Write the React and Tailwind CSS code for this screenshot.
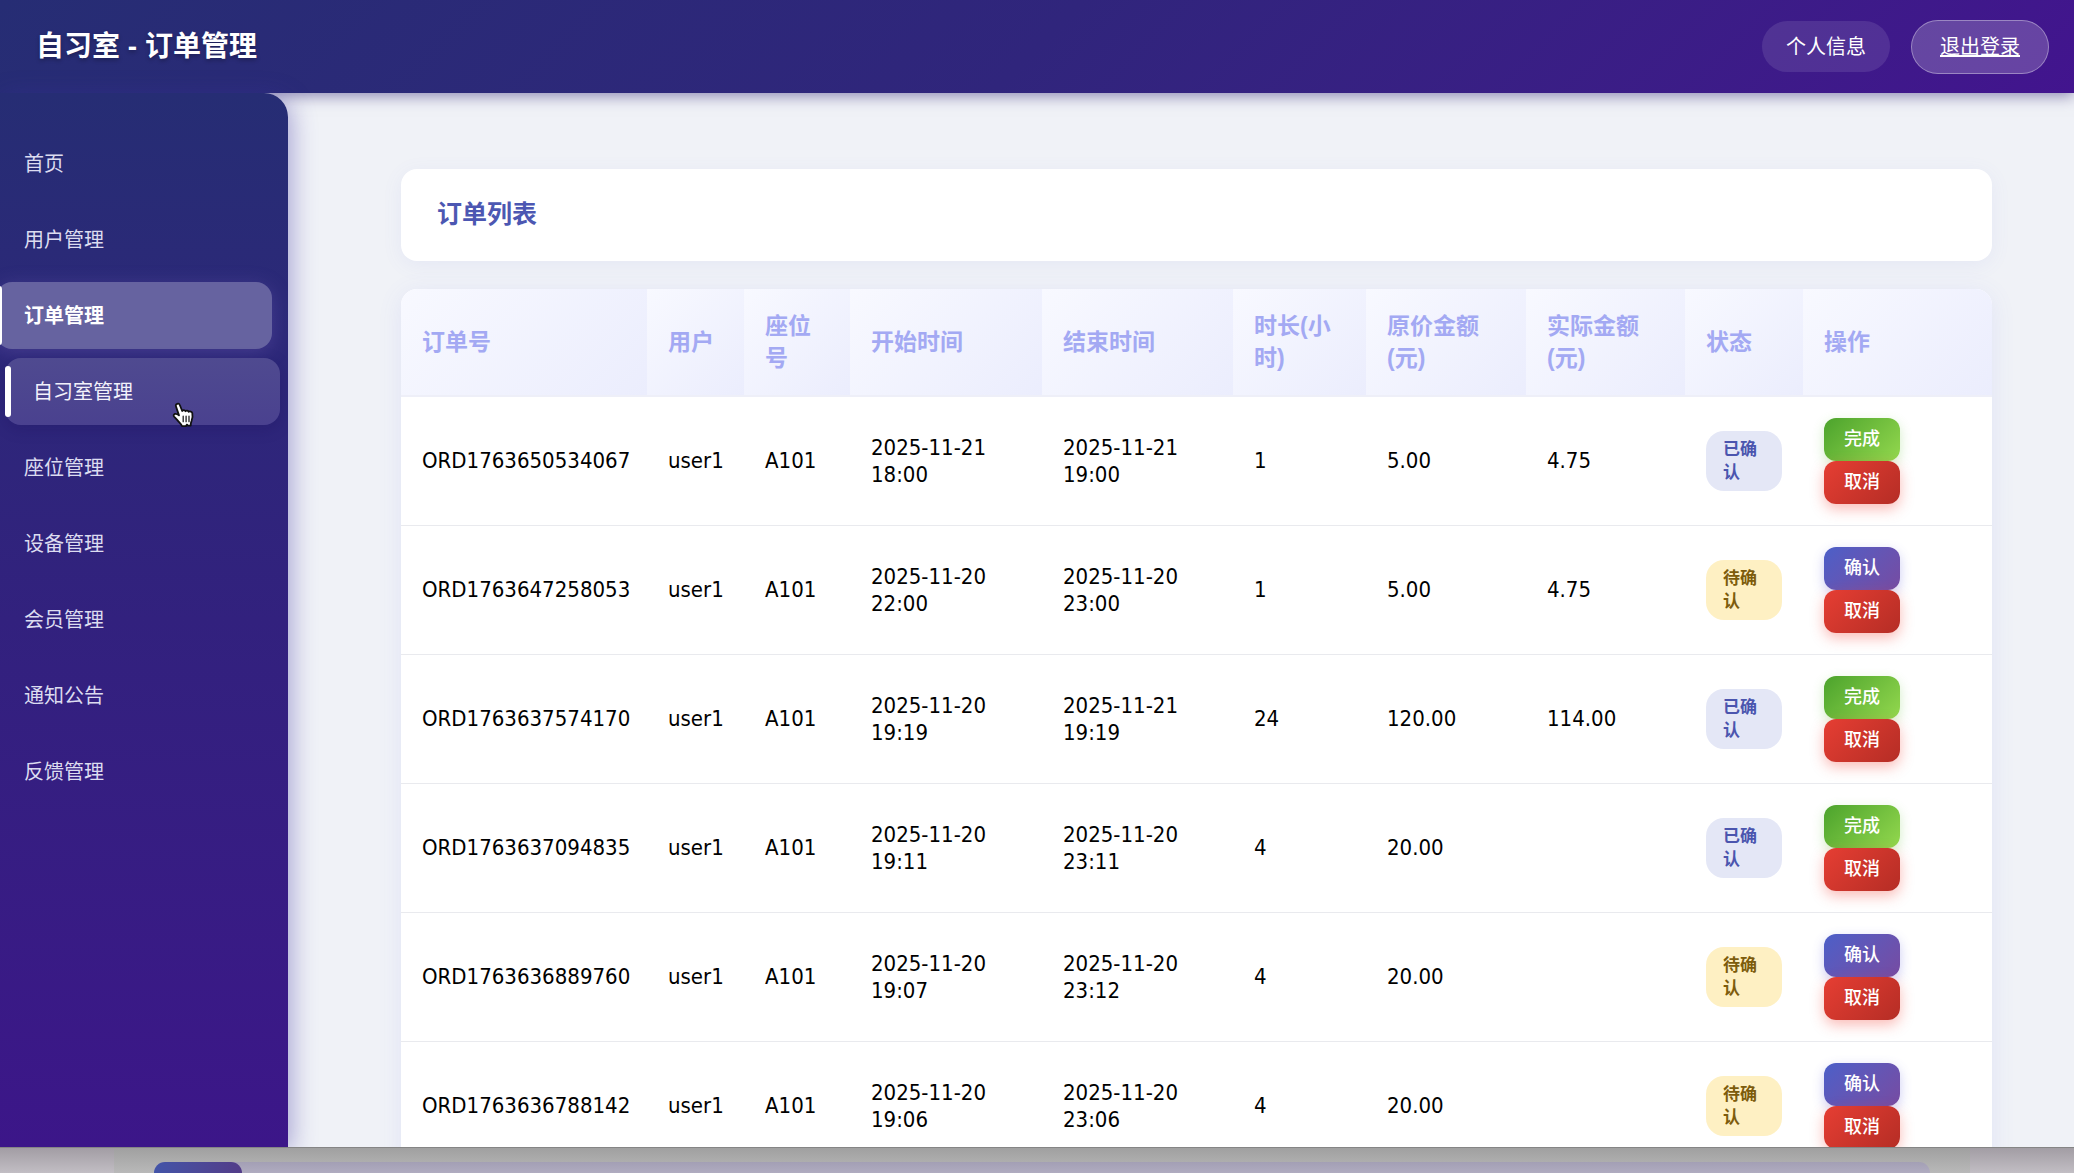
import clsx from 'clsx'

const NAV_ITEMS = [
  { label: '首页', href: '#home' },
  { label: '用户管理', href: '#users' },
  { label: '订单管理', href: '#orders', active: true },
  { label: '自习室管理', href: '#rooms', hovered: true },
  { label: '座位管理', href: '#seats' },
  { label: '设备管理', href: '#devices' },
  { label: '会员管理', href: '#members' },
  { label: '通知公告', href: '#notices' },
  { label: '反馈管理', href: '#feedback' },
]

const COLUMNS = [
  { label: '订单号', width: 'w-[246px]' },
  { label: '用户', width: 'w-[97px]' },
  { label: '座位号', width: 'w-[106px]' },
  { label: '开始时间', width: 'w-[192px]' },
  { label: '结束时间', width: 'w-[191px]' },
  { label: '时长(小时)', width: 'w-[133px]' },
  { label: '原价金额(元)', width: 'w-[160px]' },
  { label: '实际金额(元)', width: 'w-[159px]' },
  { label: '状态', width: 'w-[118px]' },
  { label: '操作', width: 'w-[189px]' },
]

const ORDERS = [
  { id: 'ORD1763650534067', start: '2025-11-21 18:00', end: '2025-11-21 19:00', hours: 1, price: '5.00', paid: '4.75', status: 'confirmed' },
  { id: 'ORD1763647258053', start: '2025-11-20 22:00', end: '2025-11-20 23:00', hours: 1, price: '5.00', paid: '4.75', status: 'pending' },
  { id: 'ORD1763637574170', start: '2025-11-20 19:19', end: '2025-11-21 19:19', hours: 24, price: '120.00', paid: '114.00', status: 'confirmed' },
  { id: 'ORD1763637094835', start: '2025-11-20 19:11', end: '2025-11-20 23:11', hours: 4, price: '20.00', paid: '', status: 'confirmed' },
  { id: 'ORD1763636889760', start: '2025-11-20 19:07', end: '2025-11-20 23:12', hours: 4, price: '20.00', paid: '', status: 'pending' },
  { id: 'ORD1763636788142', start: '2025-11-20 19:06', end: '2025-11-20 23:06', hours: 4, price: '20.00', paid: '', status: 'pending' },
]

const STATUS = {
  confirmed: { label: '已确认', className: 'bg-[#e4e7f6] text-[#4b55ae]' },
  pending: { label: '待确认', className: 'bg-[#fef0c3] text-[#7d5c0c]' },
}

const BUTTON_VARIANTS = {
  complete: 'bg-linear-135 from-[#4ba32c] to-[#93d84e] shadow-[0_4px_12px_rgba(110,200,70,0.3)]',
  confirm: 'bg-linear-135 from-[#4b5fc8] to-[#764ba2] shadow-[0_4px_12px_rgba(90,90,220,0.3)]',
  cancel: 'bg-linear-135 from-[#e63e33] to-[#b52d25] shadow-[0_5px_14px_rgba(240,60,50,0.35)]',
}

function ActionButton({ variant, children }) {
  return (
    <button
      type="button"
      className={clsx('block h-[43px] w-[76px] rounded-xl text-lg font-medium text-white', BUTTON_VARIANTS[variant])}
    >
      {children}
    </button>
  )
}

function NavItem({ label, href, active, hovered }) {
  return (
    <a
      href={href}
      aria-current={active ? 'page' : undefined}
      className={clsx(
        'relative flex h-[67px] items-center rounded-2xl pl-7 text-xl',
        hovered ? 'ml-[5px] mr-2' : '-ml-1 mr-4',
        active && 'bg-[#6663a0] font-bold text-white shadow-[0_4px_20px_rgba(130,110,200,0.3)]',
        hovered && 'bg-linear-to-b from-[#4f4a90] to-[#4a418f] text-[#f2f1fb] shadow-[0_4px_16px_rgba(20,10,80,0.2)]',
        !active && !hovered && 'text-[#dcdcf0]',
      )}
    >
      {(active || hovered) && (
        <span className={clsx('absolute left-0 w-[6px] rounded-sm bg-white', active ? 'inset-y-1' : 'inset-y-2')} />
      )}
      {label}
    </a>
  )
}

function HandCursor() {
  return (
    <svg className="pointer-events-none absolute top-[402px] left-[172px] z-30 h-[26px] w-[24px]" viewBox="0 0 24 26">
      <path
        d="M5.2 1.800c1.200-.5 2.200.1 2.600 1.200l2.400 6c.6-1.200 2.700-1.200 3.300.2.900-.9 2.600-.7 3.100.6 1.200-.8 3.300-.3 3.700 1.300.5 2.500.3 5.400-.8 8-.6 1.300-.8 2.600-.8 4.400l-3 .1-.7-1-1.100 1.500H10c-.6-1.900-2.100-3-3.600-4.700-1.400-1.600-2.600-3.200-4.300-4.700-.9-1-.4-2.400.8-2.800 1.400-.4 2.800.3 4.100 1.500L4 4.500c-.5-1.100 0-2.300 1.200-2.700z"
        fill="#fff"
        stroke="#111"
        strokeWidth="1.800"
        strokeLinejoin="round"
      />
      <path d="M11.200 14.200v5.500M14.100 14.200v5.500M17 14.200v5.500" stroke="#222" strokeWidth="1.300" strokeLinecap="round" />
    </svg>
  )
}

export default function App() {
  return (
    <div className="relative flex h-screen flex-col overflow-hidden bg-[#b5b1b7] font-['Liberation_Sans','Noto_Sans_CJK_SC',sans-serif]">
      <div className="relative z-10 flex min-h-0 flex-1 flex-col overflow-hidden bg-[#f0f2f7]">
        <header className="relative z-10 flex h-[93px] shrink-0 items-center justify-between bg-linear-135 from-[#262d74] via-[#30257c] to-[#42148e] pr-[25px] pl-9 shadow-[0_3px_14px_rgba(40,30,110,0.5)]">
          <h1 className="text-[28px] font-bold text-white [text-shadow:0_2px_4px_rgba(0,0,0,0.3)]">自习室 - 订单管理</h1>
          <div className="flex items-center gap-[21px] text-xl text-white">
            <a href="#profile" className="flex h-[51px] items-center rounded-full bg-white/10 px-6">
              个人信息
            </a>
            <a href="#logout" className="flex h-[54px] items-center rounded-full border border-white/35 bg-white/20 px-7 underline">
              退出登录
            </a>
          </div>
        </header>

        <div className="flex min-h-0 flex-1">
          <aside className="relative z-20 w-72 shrink-0 rounded-tr-3xl bg-linear-to-b from-[#262d74] via-[#32217e] to-[#3c1689] shadow-[4px_4px_24px_rgba(60,50,160,0.4)]">
            <nav className="flex flex-col gap-[9px] overflow-hidden pt-[37px]">
              {NAV_ITEMS.map((item) => (
                <NavItem key={item.href} {...item} />
              ))}
            </nav>
          </aside>

          <main className="min-w-0 flex-1 overflow-hidden pt-[76px] pr-[82px] pl-[113px]">
            <section className="flex h-[92px] items-center rounded-2xl bg-white px-9 shadow-[0_4px_20px_rgba(100,110,220,0.08)]">
              <h2 className="text-[25px] font-bold text-[#4c57b2]">订单列表</h2>
            </section>

            <div className="mt-7 overflow-hidden rounded-2xl bg-white shadow-[0_4px_24px_rgba(100,110,240,0.1)]">
              <table className="w-full table-fixed border-collapse text-left">
                <thead>
                  <tr className="h-[107px]">
                    {COLUMNS.map(({ label, width }) => (
                      <th
                        key={label}
                        scope="col"
                        className={clsx(
                          'border-b-2 border-[#eeeff8] bg-linear-135 from-[#f8f9ff] to-[#ebedfd] px-[21px] text-[23px] leading-8 font-bold text-[#a3a9f3]',
                          width,
                        )}
                      >
                        {label}
                      </th>
                    ))}
                  </tr>
                </thead>
                <tbody className="font-['DejaVu_Sans_Condensed','Noto_Sans_CJK_SC',sans-serif] text-[22px] leading-[27px] text-black">
                  {ORDERS.map((order) => (
                    <tr key={order.id} className="h-[129px] border-b border-[#e9eaee]">
                      <td className="px-[21px]">{order.id}</td>
                      <td className="px-[21px]">user1</td>
                      <td className="px-[21px]">A101</td>
                      <td className="px-[21px]">{order.start}</td>
                      <td className="px-[21px]">{order.end}</td>
                      <td className="px-[21px]">{order.hours}</td>
                      <td className="px-[21px]">{order.price}</td>
                      <td className="px-[21px]">{order.paid}</td>
                      <td className="px-[21px]">
                        <span
                          className={clsx(
                            'block w-[76px] rounded-[18px] px-[17px] py-[7px] text-[17px] leading-[23px] font-semibold',
                            STATUS[order.status].className,
                          )}
                        >
                          {STATUS[order.status].label}
                        </span>
                      </td>
                      <td className="px-[21px]">
                        {order.status === 'confirmed' ? (
                          <ActionButton variant="complete">完成</ActionButton>
                        ) : (
                          <ActionButton variant="confirm">确认</ActionButton>
                        )}
                        <ActionButton variant="cancel">取消</ActionButton>
                      </td>
                    </tr>
                  ))}
                </tbody>
              </table>
            </div>
          </main>
        </div>
        <HandCursor />
      </div>

      {/* Top edge of the page behind the window */}
      <div className="flex h-[26px] shrink-0 border-t border-[#858585] bg-linear-to-b from-[#a29da4] to-[#c2bec4] pr-[104px] pl-[114px]">
        <div className="flex flex-1 items-end bg-linear-to-b from-[#a0a0a0] to-[#b9b9b9] px-10">
          <div className="h-[11px] flex-1 rounded-t-2xl bg-linear-to-b from-[#a39fb5] to-[#b0acc0]">
            <div className="h-full w-[88px] rounded-t-2xl bg-linear-to-r from-[#4254a8] to-[#523c88]" />
          </div>
        </div>
      </div>
    </div>
  )
}
